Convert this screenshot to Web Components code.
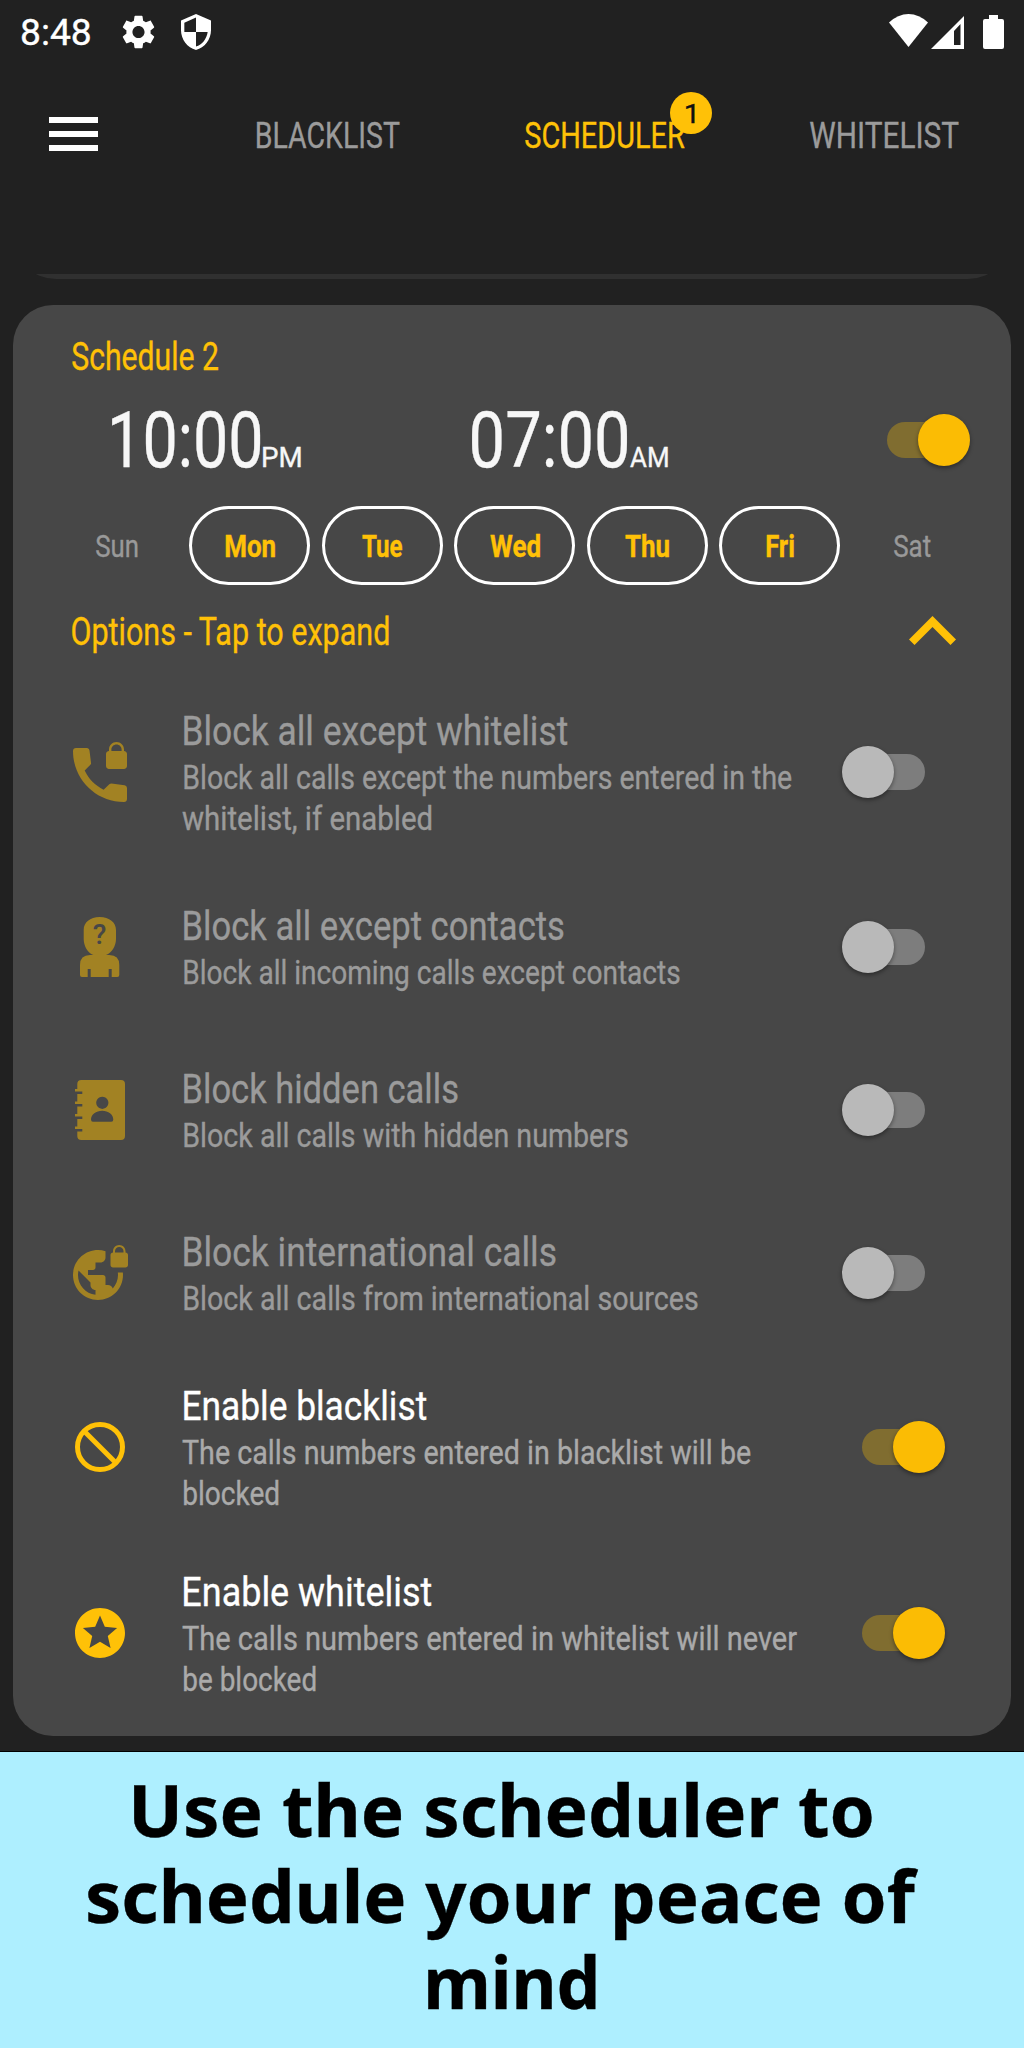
<!DOCTYPE html>
<html lang="en">
<head>
<meta charset="utf-8">
<title>Scheduler</title>
<style>
html, body
{
    margin: 0;
    background: #212121;
    font-family: Roboto, "Liberation Sans", sans-serif;
}
</style>
</head>
<body>
<scheduler-app></scheduler-app>

<script>
const measure = document.createElement("canvas").getContext("2d");

// one line of text, condensed or stretched to the given ink width
class FitText extends HTMLElement
{
    connectedCallback()
    {
        if(this.shadowRoot) return;
        var shadow = this.attachShadow({mode: "open"});
        var size = Number(this.getAttribute("size"));
        var width = Number(this.getAttribute("width"));
        var weight = this.getAttribute("weight") || "400";
        var family = this.getAttribute("family") || "Roboto";
        var line = this.getAttribute("line") || size * 1.2;

        measure.font = `${weight} ${size}px "${family}"`;
        var box = measure.measureText(this.textContent.trim());
        var scale = width / (box.actualBoundingBoxRight + box.actualBoundingBoxLeft);
        var shift = box.actualBoundingBoxLeft * scale;

        shadow.innerHTML =
        `<style>
        :host
        {
            display: block;
            flex: none;
            width: ${width}px;
            font: ${weight} ${size}px/${line}px "${family}", "Liberation Sans", sans-serif;
            white-space: nowrap;
        }
        span
        {
            display: block;
            width: max-content;
            transform-origin: 0 0;
            transform: translate(${shift}px, 1px) scaleX(${scale});
            -webkit-text-stroke: .35px currentColor;
        }
        </style><span><slot></slot></span>`;
    }
}

class ToggleSwitch extends HTMLElement
{
    constructor()
    {
        super();
        this.attachShadow({mode: "open"}).innerHTML =
        `<style>
        :host
        {
            display: flex;
            flex: none;
            align-items: center;
            width: 103px;
            height: 52px;
        }
        .track
        {
            display: flex;
            align-items: center;
            width: 63px;
            height: 36px;
            margin: 0 auto;
            border-radius: 18px;
            background: #7d7d7d;
        }
        .thumb
        {
            flex: none;
            width: 52px;
            height: 52px;
            margin-left: -20.5px;
            border-radius: 50%;
            background: #b9b9b9;
            box-shadow: 0 2px 4px rgba(0,0,0,.4);
        }
        :host([on]) .track { background: #806d30; }
        :host([on]) .thumb
        {
            margin-left: 31px;
            background: #fbbc04;
        }
        </style>
        <div class="track"><div class="thumb"></div></div>`;
    }
}

const lock = "v-.5C20 2.12 18.88 1 17.5 1S15 2.12 15 3.5V4c-.55 0-1 .45-1 1v4c0 .55.45 1 1 1h5c.55 0 1-.45 1-1V5c0-.55-.45-1-1-1zm-.8 0h-3.4v-.5c0-.94.76-1.7 1.7-1.7s1.7.76 1.7 1.7V4z";

// name: [width, height, viewBox, content]
const icons =
{
    settings: [33, 34, "2.2 2 19.6 20", `<path d="M19.14 12.94c.04-.3.06-.61.06-.94 0-.32-.02-.64-.07-.94l2.03-1.58c.18-.14.23-.41.12-.61l-1.92-3.32c-.12-.22-.37-.29-.59-.22l-2.39.96c-.5-.38-1.03-.7-1.62-.94l-.36-2.54c-.04-.24-.24-.41-.48-.41h-3.84c-.24 0-.43.17-.47.41l-.36 2.54c-.59.24-1.13.57-1.62.94l-2.39-.96c-.22-.08-.47 0-.59.22L2.74 8.87c-.12.21-.08.47.12.61l2.03 1.58c-.05.3-.09.63-.09.94s.02.64.07.94l-2.03 1.58c-.18.14-.23.41-.12.61l1.92 3.32c.12.22.37.29.59.22l2.39-.96c.5.38 1.03.7 1.62.94l.36 2.54c.05.24.24.41.48.41h3.84c.24 0 .44-.17.47-.41l.36-2.54c.59-.24 1.13-.56 1.62-.94l2.39.96c.22.08.47 0 .59-.22l1.92-3.32c.12-.22.07-.47-.12-.61l-2.01-1.58zM12 15.6c-1.98 0-3.6-1.62-3.6-3.6s1.62-3.6 3.6-3.6 3.6 1.62 3.6 3.6-1.62 3.6-3.6 3.6z"/>`],
    shield: [30, 36, "3 1 18 22", `<path d="M12 1L3 5v6c0 5.55 3.84 10.74 9 12 5.16-1.26 9-6.45 9-12V5l-9-4zm0 10.99h7c-.53 4.12-3.28 7.79-7 8.94V12H5V6.3l7-3.11v8.8z"/>`],
    wifi: [39, 33, "0 0 39 33", `<path d="M0 8.5Q9 0 19.5 0T39 8.5L19.5 33z"/>`],
    signal: [33, 33, "0 0 33 33", `<path fill-rule="evenodd" d="M33 0v33H0zM29.5 8L23 15v14h6.5z"/>`],
    battery: [21, 34, "0 0 21 34", `<path d="M6 0h9v4h4q2 0 2 2v26q0 2-2 2H2q-2 0-2-2V6q0-2 2-2h4z"/>`],
    menu: [49, 34, "0 0 49 34", `<path d="M0 0h49v6H0zM0 14h49v6H0zM0 28h49v6H0z"/>`],
    up: [47, 29, "6 8 12 7.41", `<path d="M12 8l-6 6 1.41 1.41L12 10.83l4.59 4.58L18 14z"/>`],
    phone: [54, 60, "3 1 18 20", `<path d="M20 4${lock}M9 7.9L8.5 3.8C8.4 3.3 8.1 3 7.6 3H4c-.6 0-1 .4-1 1 0 9.4 7.6 17 17 17 .6 0 1-.4 1-1v-3.6c0-.5-.3-.9-.8-1l-4.4-.6c-.2 0-.5.1-.7.3l-1.9 1.8c-2.8-1.4-5-3.6-6.3-6.4l1.9-1.9c.2-.2.3-.4.2-.7z"/>`],
    unknown: [39.3, 60, "0 0 39.3 60", `<path d="M19.6 0C29.5 0 36 5.5 36 13v9c0 7-4 13.5-10 16h3.3q10 0 10 10v10q0 2-2 2h-5.6v-8h-3v8H10.7v-8h-3v8H2q-2 0-2-2V48q0-10 10-10h3.3C7.5 35.5 3.7 29 3.7 22v-9C3.7 5.500 10 0 19.6 0z"/><text x="19.6" y="27" text-anchor="middle" font-family="Roboto" font-weight="500" font-size="28" fill="#474747">?</text>`],
    contacts: [50, 60, "0 0 50 60", `<path fill-rule="evenodd" d="M6.3 0H46q4 0 4 4v52q0 4-4 4H6.3q-4 0-4-4v-4.5h5v-2.5H0v-2.5h2.3v-7.500h5v-2.5H0v-2.5h2.3v-7.5h5v-2.5H0v-2.5h2.3v-7.5h5v-2.5H0v-2.5h2.3V4q0-4 4-4zM27.3 16.7a6.1 6.1 0 1 0 .01 0zM16 39.5q0 2.2 2 2.2h18.3q2 0 2-2.200c0-5-5-8.7-11.1-8.7S16 34.5 16 39.5z"/>`],
    globe: [55, 55, "1 1 22 22", `<path d="M22 4v-.5C22 2.12 20.88 1 19.5 1S17 2.12 17 3.5V4c-.55 0-1 .45-1 1v4c0 .55.45 1 1 1h5c.55 0 1-.45 1-1V5c0-.55-.45-1-1-1zm-.8 0h-3.4v-.5c0-.94.76-1.7 1.7-1.7s1.7.76 1.7 1.7V4zm-2.28 8c.04.33.08.66.08 1 0 2.08-.8 3.97-2.1 5.39-.26-.81-1-1.39-1.9-1.39h-1v-3c0-.55-.45-1-1-1H7v-2h2c.55 0 1-.45 1-1V8h2c1.1 0 2-.9 2-2V3.46c-.95-.3-1.95-.46-3-.46C5.48 3 1 7.48 1 13s4.48 10 10 10 10-4.48 10-10c0-.34-.02-.67-.05-1h-2.03zM10 20.93c-3.95-.49-7-3.85-7-7.93 0-.62.08-1.21.21-1.79L8 16v1c0 1.1.9 2 2 2v1.93z"/>`],
    block: [50, 50, "2 2 20 20", `<circle cx="12" cy="12" r="9" fill="none" stroke="currentColor" stroke-width="2"/><path d="M5.7 5.7l12.6 12.6" stroke="currentColor" stroke-width="2"/>`],
    star: [50, 50, "2 2 20 20", `<path d="M11.99 2C6.47 2 2 6.48 2 12s4.47 10 9.99 10C17.52 22 22 17.52 22 12S17.52 2 11.99 2zm4.24 16L12 15.45 7.77 18l1.12-4.81-3.73-3.23 4.92-.42L12 5l1.92 4.53 4.92.42-3.73 3.23L16.23 18z"/>`]
};

class AppIcon extends HTMLElement
{
    connectedCallback()
    {
        if(this.shadowRoot) return;
        var [width, height, viewBox, content] = icons[this.getAttribute("name")];
        this.attachShadow({mode: "open"}).innerHTML =
        `<style>
        :host { display: block; flex: none; }
        svg { display: block; fill: currentColor; }
        </style>
        <svg width="${width}" height="${height}" viewBox="${viewBox}" preserveAspectRatio="none">${content}</svg>`;
    }
}

class StatusBar extends HTMLElement
{
    constructor()
    {
        super();
        this.attachShadow({mode: "open"}).innerHTML =
        `<style>
        :host
        {
            display: flex;
            box-sizing: border-box;
            align-items: center;
            height: 64px;
            padding: 0 20px 0 22px;
            color: #fff;
        }
        .settings { margin-left: 32px; }
        .shield { margin-left: 26px; }
        .wifi { margin: -3px 3px 0 auto; }
        .signal { margin-right: 19px; }
        .battery { margin-top: -1px; }
        </style>
        <fit-text size="37" width="68">8:48</fit-text>
        <app-icon class="settings" name="settings"></app-icon>
        <app-icon class="shield" name="shield"></app-icon>
        <app-icon class="wifi" name="wifi"></app-icon>
        <app-icon class="signal" name="signal"></app-icon>
        <app-icon class="battery" name="battery"></app-icon>`;
    }
}

class TabBar extends HTMLElement
{
    constructor()
    {
        super();
        this.attachShadow({mode: "open"}).innerHTML =
        `<style>
        :host
        {
            display: flex;
            box-sizing: border-box;
            align-items: center;
            justify-content: space-between;
            height: 142px;
            padding: 0 65px 0 48.5px;
            color: #9b9b9b;
        }
        app-icon { color: #fff; margin: -2px 35px 0 0; }
        .active
        {
            position: relative;
            color: #fec107;
        }
        .badge
        {
            position: absolute;
            left: 145px;
            top: -21px;
            display: flex;
            justify-content: center;
            width: 42px;
            height: 42px;
            border-radius: 50%;
            background: #ffc107;
            color: #111;
        }
        .badge fit-text { margin-right: 2px; }
        </style>
        <app-icon name="menu"></app-icon>
        <fit-text size="37" width="143">BLACKLIST</fit-text>
        <div class="active">
            <fit-text size="37" width="160">SCHEDULER</fit-text>
            <div class="badge"><fit-text size="26" line="42" width="9">1</fit-text></div>
        </div>
        <fit-text size="37" width="149">WHITELIST</fit-text>`;
    }
}

class WeekDay extends HTMLElement
{
    constructor()
    {
        super();
        this.attachShadow({mode: "open"}).innerHTML =
        `<style>
        :host
        {
            display: flex;
            box-sizing: border-box;
            align-items: center;
            justify-content: center;
            height: 79px;
            border: 3px solid transparent;
            border-radius: 40px;
            color: #999;
        }
        :host([on])
        {
            border-color: #fff;
            color: #ffc107;
        }
        </style><slot></slot>`;
    }
}

class OptionRow extends HTMLElement
{
    connectedCallback()
    {
        if(this.shadowRoot) return;
        var on = this.hasAttribute("on");
        this.attachShadow({mode: "open"}).innerHTML =
        `<style>
        :host
        {
            display: flex;
            box-sizing: border-box;
            align-items: center;
            min-height: 163px;
            padding: 26px 66px 26px 57px;
            color: ${on ? "#aaa" : "#9b9b9b"};
        }
        .icon
        {
            display: flex;
            justify-content: center;
            width: 60px;
            margin-right: 54px;
            color: ${on ? "#ffc107" : "#a28223"};
        }
        .title
        {
            margin-bottom: 1px;
            color: ${on ? "#fff" : "#9b9b9b"};
        }
        ::slotted(.hang) { margin-left: -2px; }
        toggle-switch { margin-left: auto; }
        </style>
        <div class="icon"><app-icon name="${this.getAttribute("icon")}"></app-icon></div>
        <div>
            <div class="title"><slot name="title"></slot></div>
            <slot></slot>
        </div>
        <toggle-switch ${on ? "on" : ""}></toggle-switch>`;
    }
}

class ScheduleCard extends HTMLElement
{
    constructor()
    {
        super();
        this.attachShadow({mode: "open"}).innerHTML =
        `<style>
        :host
        {
            display: block;
            box-sizing: border-box;
            height: 1431px;
            margin: 0 13px;
            padding-top: 29px;
            border-radius: 40px;
            background: #474747;
        }
        .name { padding-left: 59px; color: #ffc107; }
        .times
        {
            display: flex;
            align-items: center;
            height: 122px;
            padding: 0 41px 0 99px;
            color: #f7f7f7;
        }
        .time
        {
            display: flex;
            align-items: baseline;
            gap: 3px;
            margin-right: 171px;
        }
        .times toggle-switch { margin-left: auto; }
        .days
        {
            display: grid;
            grid-template-columns: repeat(7, 121px);
            column-gap: 11.6px;
            margin: 5px 0 0 43.5px;
        }
        .options
        {
            display: flex;
            align-items: center;
            justify-content: space-between;
            height: 94px;
            padding: 0 55px 0 59px;
            color: #ffc107;
        }
        .options app-icon { margin-top: -3px; }
        </style>
        <div class="name"><fit-text size="38" line="45" width="146">Schedule 2</fit-text></div>
        <div class="times">
            <div class="time">
                <fit-text size="77" width="148">10:00</fit-text>
                <fit-text size="27" width="38">PM</fit-text>
            </div>
            <div class="time">
                <fit-text size="77" width="155">07:00</fit-text>
                <fit-text size="27" width="38">AM</fit-text>
            </div>
            <toggle-switch on></toggle-switch>
        </div>
        <div class="days">
            <week-day><fit-text size="31" width="42">Sun</fit-text></week-day>
            <week-day on><fit-text size="31" weight="700" width="50">Mon</fit-text></week-day>
            <week-day on><fit-text size="31" weight="700" width="40">Tue</fit-text></week-day>
            <week-day on><fit-text size="31" weight="700" width="50">Wed</fit-text></week-day>
            <week-day on><fit-text size="31" weight="700" width="44">Thu</fit-text></week-day>
            <week-day on><fit-text size="31" weight="700" width="28">Fri</fit-text></week-day>
            <week-day><fit-text size="31" width="37">Sat</fit-text></week-day>
        </div>
        <div class="options">
            <fit-text size="38" width="317">Options - Tap to expand</fit-text>
            <app-icon name="up"></app-icon>
        </div>
        <option-row icon="phone">
            <fit-text slot="title" size="41" line="51" width="383">Block all except whitelist</fit-text>
            <fit-text size="32.5" line="41" width="608">Block all calls except the numbers entered in the</fit-text>
            <fit-text class="hang" size="32.5" line="41" width="250">whitelist, if enabled</fit-text>
        </option-row>
        <option-row icon="unknown">
            <fit-text slot="title" size="41" line="51" width="380">Block all except contacts</fit-text>
            <fit-text size="32.5" line="41" width="496">Block all incoming calls except contacts</fit-text>
        </option-row>
        <option-row icon="contacts">
            <fit-text slot="title" size="41" line="51" width="274">Block hidden calls</fit-text>
            <fit-text size="32.5" line="41" width="444">Block all calls with hidden numbers</fit-text>
        </option-row>
        <option-row icon="globe">
            <fit-text slot="title" size="41" line="51" width="372">Block international calls</fit-text>
            <fit-text size="32.5" line="41" width="514">Block all calls from international sources</fit-text>
        </option-row>
        <option-row icon="block" on>
            <fit-text slot="title" size="41" line="51" width="242">Enable blacklist</fit-text>
            <fit-text class="hang" size="32.5" line="41" width="569">The calls numbers entered in blacklist will be</fit-text>
            <fit-text size="32.5" line="41" width="95">blocked</fit-text>
        </option-row>
        <option-row icon="star" on>
            <fit-text slot="title" size="41" line="51" width="247">Enable whitelist</fit-text>
            <fit-text class="hang" size="32.5" line="41" width="615">The calls numbers entered in whitelist will never</fit-text>
            <fit-text size="32.5" line="41" width="132">be blocked</fit-text>
        </option-row>`;
    }
}

class PromoCaption extends HTMLElement
{
    constructor()
    {
        super();
        this.attachShadow({mode: "open"}).innerHTML =
        `<style>
        :host
        {
            display: flex;
            box-sizing: border-box;
            flex-direction: column;
            align-items: center;
            height: 297px;
            padding-top: 12.5px;
            border-top: 1px solid #000;
            background: #aeefff;
            color: #000;
        }
        .wrapped { margin-right: 18px; }
        </style>
        <fit-text class="wrapped" family="Noto Sans" weight="700" size="72" line="86.3" width="738">Use the scheduler to</fit-text>
        <fit-text class="wrapped" family="Noto Sans" weight="700" size="72" line="86.3" width="831">schedule your peace of</fit-text>
        <fit-text family="Noto Sans" weight="700" size="72" line="86.3" width="168">mind</fit-text>`;
    }
}

class SchedulerApp extends HTMLElement
{
    constructor()
    {
        super();
        this.attachShadow({mode: "open"}).innerHTML =
        `<style>
        :host
        {
            display: flex;
            flex-direction: column;
            width: 1024px;
            height: 2048px;
            overflow: hidden;
            background: #212121;
        }
        /* bottom edge of the previous card, scrolled under the tabs */
        .previous
        {
            display: flex;
            align-items: flex-end;
            height: 5px;
            margin: 68px 13px 26px;
            overflow: hidden;
        }
        .previous div
        {
            flex: 1;
            height: 88px;
            border-radius: 43px;
            background: #303030;
        }
        promo-caption { margin-top: auto; }
        </style>
        <status-bar></status-bar>
        <tab-bar></tab-bar>
        <div class="previous"><div></div></div>
        <schedule-card></schedule-card>
        <promo-caption></promo-caption>`;
    }
}

customElements.define("fit-text", FitText);
customElements.define("toggle-switch", ToggleSwitch);
customElements.define("app-icon", AppIcon);
customElements.define("status-bar", StatusBar);
customElements.define("tab-bar", TabBar);
customElements.define("week-day", WeekDay);
customElements.define("option-row", OptionRow);
customElements.define("schedule-card", ScheduleCard);
customElements.define("promo-caption", PromoCaption);
customElements.define("scheduler-app", SchedulerApp);
</script>
</body>
</html>
